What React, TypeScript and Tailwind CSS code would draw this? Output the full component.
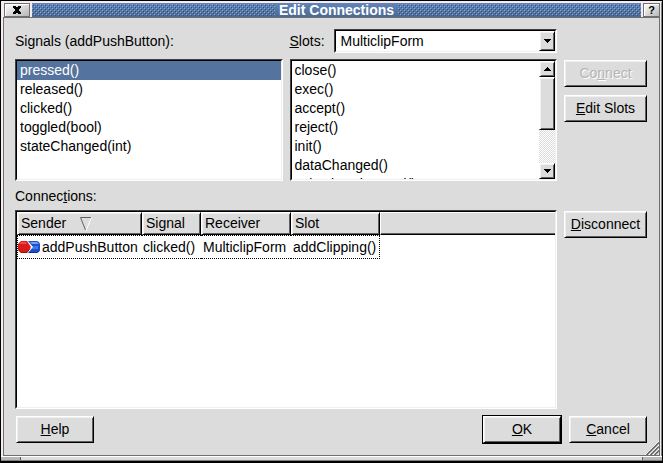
import type { ReactNode } from "react";

const signals = ["pressed()", "released()", "clicked()", "toggled(bool)", "stateChanged(int)"];

const slots = ["close()", "exec()", "accept()", "reject()", "init()", "dataChanged()", "selectionChanged()"];

const raised = "border border-t-white border-l-white border-r-black border-b-black bg-[#dcdcdc] shadow-[inset_1px_1px_0_#f0f0f0,inset_-1px_-1px_0_#606060]";
const sunken = "border border-t-[#404040] border-l-[#404040] border-r-white border-b-white bg-white";
const sunkenInner = "border border-t-black border-l-black border-r-[#f0f0f0] border-b-[#f0f0f0]";
const titleButton = "flex items-center justify-center border border-[#707070] bg-linear-to-br from-white to-[#b8b8b8] shadow-[inset_1px_1px_0_#ffffff]";

function PushButton({ children, disabled }: { children: ReactNode; disabled?: boolean }) {
    return (
        <button
            type="button"
            disabled={disabled}
            className={`${raised} h-[27px] w-full whitespace-nowrap leading-[25px] disabled:text-[#b4b4b4] disabled:[text-shadow:1px_1px_0_#ffffff]`}
        >
            {children}
        </button>
    );
}

function Arrow({ up }: { up?: boolean }) {
    return (
        <svg width="7" height="4" viewBox="0 0 7 4" shapeRendering="crispEdges">
            {up
                ? <path d="M3 0h1v1h1v1h1v1h1v1H0V3h1V2h1V1h1z" />
                : <path d="M0 0h7v1H6v1H5v1H4v1H3V3H2V2H1V1H0z" />}
        </svg>
    );
}

function ConnectionIcon() {
    return (
        <svg width="22" height="12" viewBox="0 0 22 12" className="shrink-0">
            <path d="M9 0h10l2 1 1 2v6l-1 2-2 1H9l5-6z" fill="#1c50c8" />
            <path d="M12 1h7l2 2H14z" fill="#70a0f8" />
            <path d="M14 5h6v3h-7z" fill="#3c78f0" />
            <path d="M9 11.5h10l2.500-2.500" fill="none" stroke="#10308c" />
            <path d="M9 0l5 6-5 6" fill="none" stroke="#ffffff" strokeWidth="1.500" />
            <path d="M3 0h6l4 6-4 6H3L0 9V3z" fill="#d81c1c" />
            <path d="M3 1h5l1 2H2z" fill="#f04848" />
            <path d="M1 9l2 2.500h6l3-4" fill="none" stroke="#981010" />
        </svg>
    );
}

function TitleDots({ id }: { id: string }) {
    return (
        <svg className="h-3 min-w-0 flex-1" shapeRendering="crispEdges" aria-hidden="true">
            <defs>
                <pattern id={id} width="4" height="4" patternUnits="userSpaceOnUse">
                    <path d="M0 0h1v1H0zM2 2h1v1H2z" fill="#86a8dc" />
                    <path d="M1 1h1v1H1zM3 3h1v1H3z" fill="#354f7a" />
                </pattern>
            </defs>
            <rect width="100%" height="100%" fill={`url(#${id})`} />
        </svg>
    );
}

function TitleBar() {
    return (
        <header className="flex h-[14px] items-stretch pl-px">
            <button type="button" aria-label="Close" className={`${titleButton} w-[26px]`}>
                <svg width="8" height="8" viewBox="0 0 8 8" shapeRendering="crispEdges">
                    <path d="M0 0h3v1h2V0h3v2H7v1H6v2h1v1h1v2H5V7H3v1H0V6h1V5h1V3H1V2H0z" />
                </svg>
            </button>
            <div className="mx-[2px] flex min-w-0 flex-1 items-center bg-linear-to-b from-[#6285ba] to-[#4b6990]">
                <TitleDots id="dots-left" />
                <h1 className="px-1 font-bold leading-[14px] text-white">Edit Connections</h1>
                <TitleDots id="dots-right" />
            </div>
            <button type="button" aria-label="What's this?" className={`${titleButton} w-[17px] text-[11px] font-bold leading-3`}>
                ?
            </button>
        </header>
    );
}

function SignalsList() {
    return (
        <div className={`${sunken} h-[122px]`}>
            <ul aria-labelledby="signals-label" className={`${sunkenInner} h-full`}>
                {signals.map((signal, index) => (
                    <li key={signal} className={`h-[19px] px-[3px] leading-[19px] ${index === 0 ? "bg-[#54739e] text-white" : ""}`}>
                        {signal}
                    </li>
                ))}
            </ul>
        </div>
    );
}

function SlotsList() {
    return (
        <div className={`${sunken} h-[122px]`}>
            <div className={`${sunkenInner} flex h-full`}>
                <ul aria-label="Slots" className="flex-1 overflow-hidden">
                    {slots.map((slot) => (
                        <li key={slot} className="h-[19px] px-[3px] leading-[19px]">{slot}</li>
                    ))}
                </ul>
                <div className="flex w-4 flex-col bg-[repeating-conic-gradient(#dcdcdc_0_25%,#ffffff_0_50%)] bg-[size:2px_2px]">
                    <button type="button" aria-label="Scroll up" className={`${raised} flex h-4 items-center justify-center`}>
                        <Arrow up />
                    </button>
                    <div className={`${raised} h-[53px]`} />
                    <button type="button" aria-label="Scroll down" className={`${raised} mt-auto flex h-4 items-center justify-center`}>
                        <Arrow />
                    </button>
                </div>
            </div>
        </div>
    );
}

function ConnectionsTable() {
    const head = `${raised} h-[23px] px-[3px] text-left font-normal leading-[21px]`;

    return (
        <div className={`${sunken} min-h-[120px] flex-1`}>
            <div className={`${sunkenInner} h-full`}>
                <table aria-labelledby="connections-label" className="w-full table-fixed border-separate border-spacing-0 whitespace-nowrap">
                    <colgroup>
                        <col className="w-[125px]" />
                        <col className="w-[59px]" />
                        <col className="w-[90px]" />
                        <col className="w-[89px]" />
                        <col />
                    </colgroup>
                    <thead>
                        <tr>
                            <th className={head}>
                                <span className="flex items-center gap-[14px]">
                                    Sender
                                    <svg width="12" height="14" viewBox="0 0 12 14">
                                        <path d="M11.500.5L6 13.500" fill="none" stroke="#ffffff" />
                                        <path d="M11 .5H.5L5.500 13" fill="none" stroke="#606060" />
                                    </svg>
                                </span>
                            </th>
                            <th className={head}>Signal</th>
                            <th className={head}>Receiver</th>
                            <th className={head}>Slot</th>
                            <th aria-label="Empty" className="border-t border-b border-l border-t-white border-b-black border-l-white bg-[#dcdcdc] shadow-[inset_0_-1px_0_#606060]"></th>
                        </tr>
                    </thead>
                    <tbody>
                        <tr className="leading-[22px]">
                            <td className="border-y border-l border-dotted border-black p-0">
                                <span className="flex items-center gap-[2px]">
                                    <ConnectionIcon />
                                    addPushButton
                                </span>
                            </td>
                            <td className="border-y border-dotted border-black px-px py-0">clicked()</td>
                            <td className="border-y border-dotted border-black px-[2px] py-0">MulticlipForm</td>
                            <td className="border-y border-r border-dotted border-black px-[2px] py-0">addClipping()</td>
                            <td></td>
                        </tr>
                    </tbody>
                </table>
            </div>
        </div>
    );
}

function SizeGrip() {
    return (
        <svg width="14" height="14" viewBox="0 0 14 14" className="absolute right-0 bottom-0">
            <path d="M0 14L14 0M4 14L14 4M8 14L14 8" stroke="#ffffff" />
            <path d="M1.500 14L14 1.500M5.500 14L14 5.500M9.500 14L14 9.500" stroke="#606060" strokeWidth="1.500" />
        </svg>
    );
}

export default function App() {
    return (
        <div className="flex min-h-screen flex-col border border-b-2 border-black bg-[#dcdcdc] font-['Liberation_Sans',Arial,sans-serif] text-sm text-black">
            <div className="flex flex-1 flex-col border-t-2 border-r border-l-2 border-[#f4ecf0] border-r-[#808080] bg-[#f4ecf0] pr-px">
                <TitleBar />
                <main className="relative flex flex-1 flex-col border border-[#707070] bg-[#dcdcdc] pt-[11px] pr-3 pb-[11px] pl-[11px]">
                    <div className="grid grid-cols-[1fr_1fr_83px] gap-x-[7px]">
                        <h2 id="signals-label" className="leading-6">Signals (addPushButton):</h2>
                        <div className="flex gap-[9px]">
                            <label htmlFor="slots-form" className="leading-6"><u>S</u>lots:</label>
                            <div className={`${sunken} relative h-6 flex-1`}>
                                <select id="slots-form" className={`${sunkenInner} block h-full w-full appearance-none px-[5px] leading-5`}>
                                    <option>MulticlipForm</option>
                                </select>
                                <span className={`${raised} pointer-events-none absolute top-px right-px flex h-5 w-4 items-center justify-center`}>
                                    <Arrow />
                                </span>
                            </div>
                        </div>
                    </div>

                    <div className="mt-[6px] grid grid-cols-[1fr_1fr_83px] gap-x-[7px]">
                        <SignalsList />
                        <SlotsList />
                        <div className="flex flex-col gap-2 pt-px">
                            <PushButton disabled>Co<u>n</u>nect</PushButton>
                            <PushButton><u>E</u>dit Slots</PushButton>
                        </div>
                    </div>

                    <h2 id="connections-label" className="pt-[5px] pb-[3px] leading-[21px]">Connec<u>t</u>ions:</h2>

                    <div className="flex flex-1 gap-[7px]">
                        <div className="flex min-w-0 flex-1 flex-col">
                            <ConnectionsTable />
                        </div>
                        <div className="w-[83px] pt-px">
                            <PushButton><u>D</u>isconnect</PushButton>
                        </div>
                    </div>

                    <div className="mt-[6px] flex items-center">
                        <div className="ml-px w-[78px]">
                            <PushButton><u>H</u>elp</PushButton>
                        </div>
                        <div className="ml-auto w-20 border border-black">
                            <PushButton><u>O</u>K</PushButton>
                        </div>
                        <div className="ml-[7px] w-[78px]">
                            <PushButton><u>C</u>ancel</PushButton>
                        </div>
                    </div>
                    <SizeGrip />
                </main>
            </div>
            <footer className="flex h-[5px] border-t border-b border-t-white border-b-[#808080]">
                <span className="w-5 border-r border-[#606060] bg-[#b8b8b8]" />
                <span className="flex-1" />
                <span className="w-5 border-l border-[#606060] bg-[#b8b8b8]" />
            </footer>
        </div>
    );
}
